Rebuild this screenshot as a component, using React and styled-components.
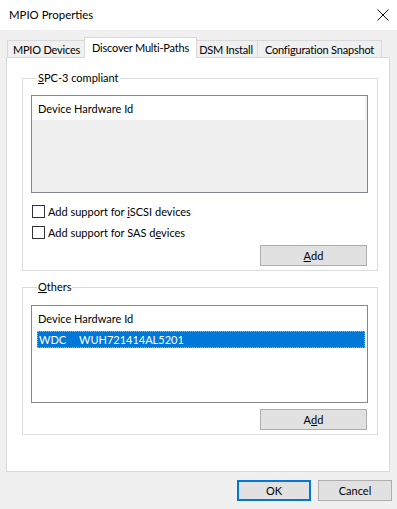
import React from "react";
import styled, { createGlobalStyle } from "styled-components";

const GlobalStyle = createGlobalStyle`
  html, body {
    margin: 0;
    padding: 0;
    background: #f0f0f0;
  }
  * {
    box-sizing: border-box;
  }
`;

const Window = styled.div`
  width: 397px;
  height: 509px;
  display: flex;
  flex-direction: column;
  background: #f0f0f0;
  font-family: Lato, "Liberation Sans", sans-serif;
  font-size: 11px;
  color: #000;
  overflow: hidden;
`;

const TitleBar = styled.div`
  height: 30px;
  flex: none;
  background: #fff;
  display: flex;
  align-items: center;
  justify-content: space-between;
  padding: 0 8px 1px 9px;
`;

const Title = styled.span`
  font-size: 11.4px;
`;

const CloseIcon = styled.svg`
  width: 12px;
  height: 12px;
  margin-top: 1px;
`;

const Body = styled.div`
  flex: 1;
  display: flex;
  flex-direction: column;
  padding: 7px 5px 0 6px;
`;

const TabStrip = styled.div`
  display: flex;
  align-items: flex-end;
  height: 21px;
  margin-bottom: -1px;
  padding-left: 1px;
  position: relative;
  z-index: 1;
`;

// tab widths are fixed like the native control measures them
const Tab = styled.div`
  flex: none;
  width: ${(p) => p.$width}px;
  display: flex;
  align-items: center;
  justify-content: center;
  border: 1px solid #d9d9d9;
  border-bottom: none;
  white-space: nowrap;
  letter-spacing: -0.2px;
  margin-left: ${(p) => (p.$first ? "0" : p.$active ? "-2px" : "-1px")};
  margin-right: ${(p) => (p.$active ? "-2px" : "0")};
  height: ${(p) => (p.$active ? "21px" : "17px")};
  margin-bottom: ${(p) => (p.$active ? "0" : "1px")};
  padding: ${(p) => (p.$active ? "0 0 2px" : "1px 0 0")};
  background: ${(p) => (p.$active ? "#fff" : "#f0f0f0")};
  position: relative;
  z-index: ${(p) => (p.$active ? 2 : 1)};
`;

const Panel = styled.div`
  width: 384px;
  height: 415px;
  background: #fff;
  border: 1px solid #d9d9d9;
  padding: 12px 11px 0 15px;
  display: flex;
  flex-direction: column;
`;

const Group = styled.fieldset`
  margin: ${(p) => p.$top || 0}px 0 0 0;
  padding: ${(p) => p.$padTop || 9}px 9px ${(p) => p.$padBottom || 4}px 8px;
  border: 1px solid #dcdcdc;
  min-width: 0;
  display: flex;
  flex-direction: column;
`;

const Legend = styled.legend`
  padding: 0 1px;
  margin-left: 6px;
  line-height: 16px;
  height: 16px;
`;

const Key = styled.span`
  text-decoration: underline;
  text-underline-offset: 1px;
`;

const List = styled.div`
  height: 98px;
  border: 1px solid #828790;
  background: ${(p) => (p.$disabled ? "#f0f0f0" : "#fff")};
  display: flex;
  flex-direction: column;
`;

const ListHeader = styled.div`
  height: 24px;
  flex: none;
  background: #fff;
  margin-right: ${(p) => (p.$disabled ? "2px" : "0")};
  padding: 0 6px;
  display: flex;
  align-items: center;
`;

const ListRow = styled.div`
  height: 17px;
  margin: 1px 2px 0 5px;
  display: flex;
  align-items: center;
  background: ${(p) => (p.$selected ? "#0078d7" : "transparent")};
  color: ${(p) => (p.$selected ? "#fff" : "#000")};
  border: 1px dotted ${(p) => (p.$selected ? "#f6a44b" : "transparent")};
  padding-left: 1px;
`;

const Cell = styled.span`
  width: ${(p) => p.$width || "auto"}px;
  flex: none;
`;

const Checks = styled.div`
  display: flex;
  flex-direction: column;
  gap: 4px;
  margin-top: 10px;
`;

const CheckRow = styled.label`
  height: 17px;
  display: flex;
  align-items: center;
  gap: 3px;
  padding-left: 1px;
`;

const CheckBox = styled.span`
  width: 13px;
  height: 13px;
  border: 1px solid #333;
  background: #fff;
  flex: none;
`;

const ButtonRow = styled.div`
  display: flex;
  justify-content: flex-end;
  gap: 7px;
  margin-top: ${(p) => p.$top || 0}px;
  padding-right: ${(p) => p.$right || 0}px;
`;

const Button = styled.button`
  width: ${(p) => p.$width || 74}px;
  height: 21px;
  padding: 0 0 1px;
  margin: 0;
  font: inherit;
  color: #000;
  background: #e1e1e1;
  border: ${(p) => (p.$default ? "2px solid #0078d7" : "1px solid #adadad")};
  display: flex;
  align-items: center;
  justify-content: center;
`;

const Footer = styled(ButtonRow)`
  margin-top: 8px;
`;

export default function App() {
  return (
    <Window>
      <GlobalStyle />
      <TitleBar>
        <Title>MPIO Properties</Title>
        <CloseIcon viewBox="0 0 12 12">
          <path d="M0.5 0.5 L11.5 11.5 M11.5 0.5 L0.5 11.5" stroke="#111" strokeWidth="1" fill="none" />
        </CloseIcon>
      </TitleBar>
      <Body>
        <TabStrip>
          <Tab $first $width={79}>MPIO Devices</Tab>
          <Tab $active $width={113}>Discover Multi-Paths</Tab>
          <Tab $width={64}>DSM Install</Tab>
          <Tab $width={125}>Configuration Snapshot</Tab>
        </TabStrip>
        <Panel>
          <Group $padBottom={4}>
            <Legend>
              <Key>S</Key>PC-3 compliant
            </Legend>
            <List $disabled>
              <ListHeader $disabled>Device Hardware Id</ListHeader>
            </List>
            <Checks>
              <CheckRow>
                <CheckBox />
                <span>
                  Add support for <Key>i</Key>SCSI devices
                </span>
              </CheckRow>
              <CheckRow>
                <CheckBox />
                <span>
                  Add support for SAS d<Key>e</Key>vices
                </span>
              </CheckRow>
            </Checks>
            <ButtonRow $top={4} $right={1}>
              <Button $width={107}>
                <Key>A</Key>dd
              </Button>
            </ButtonRow>
          </Group>
          <Group $top={8} $padTop={10} $padBottom={4}>
            <Legend>
              <Key>O</Key>thers
            </Legend>
            <List>
              <ListHeader>Device Hardware Id</ListHeader>
              <ListRow $selected>
                <Cell $width={40}>WDC</Cell>
                <Cell>WUH721414AL5201</Cell>
              </ListRow>
            </List>
            <ButtonRow $top={6} $right={1}>
              <Button $width={107}>
                A<Key>d</Key>d
              </Button>
            </ButtonRow>
          </Group>
        </Panel>
        <Footer>
          <Button $default>OK</Button>
          <Button>Cancel</Button>
        </Footer>
      </Body>
    </Window>
  );
}
